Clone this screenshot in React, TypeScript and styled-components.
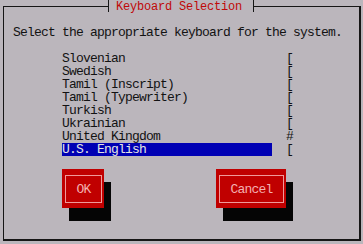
import React from "react";
import styled, { createGlobalStyle } from "styled-components";

const layouts = [
  "Slovenian",
  "Swedish",
  "Tamil (Inscript)",
  "Tamil (Typewriter)",
  "Turkish",
  "Ukrainian",
  "United Kingdom",
  "U.S. English",
];

const selectedIndex = 7;
const thumbIndex = 6;

function App() {
  return (
    <Screen>
      <GlobalStyle />
      <Frame>
        <Title>Keyboard Selection</Title>
        <Body>
          <Prompt>Select the appropriate keyboard for the system.</Prompt>
          <ListArea>
            <ListBox>
              {layouts.map((name, idx) => (
                <ListItem key={name} $selected={idx === selectedIndex}>
                  {name}
                </ListItem>
              ))}
            </ListBox>
            <ScrollTrack>
              {layouts.map((name, idx) => (
                <ScrollCell key={name}>{idx === thumbIndex ? "#" : "["}</ScrollCell>
              ))}
            </ScrollTrack>
          </ListArea>
          <ButtonRow>
            <TermButton $width={42}>
              <ButtonFace>OK</ButtonFace>
            </TermButton>
            <TermButton $width={70}>
              <ButtonFace>Cancel</ButtonFace>
            </TermButton>
          </ButtonRow>
        </Body>
      </Frame>
    </Screen>
  );
}

export default App;

const GlobalStyle = createGlobalStyle`
  html, body {
    margin: 0;
    padding: 0;
    background: #bbb6bc;
  }
`;

const Screen = styled.div`
  width: 363px;
  height: 244px;
  overflow: hidden;
  background: #bbb6bc;
  color: #121212;
  font-family: "Liberation Mono", "DejaVu Sans Mono", monospace;
  font-size: 13px;
  letter-spacing: -0.8px;
  line-height: 13px;
`;

// frame: left edge x=3, right edge x=361, bottom edge y=241
const Frame = styled.fieldset`
  box-sizing: border-box;
  margin: 0 0 0 3px;
  padding: 0;
  width: 358px;
  height: 241px;
  border: 2px solid #161616;
  border-top-width: 1px;
  border-left-width: 1px;
  min-width: 0;
`;

const Title = styled.legend`
  margin-left: 104px;
  padding: 1px 11px 0 7px;
  height: 11px;
  line-height: 12px;
  font-size: 12px;
  letter-spacing: -0.2px;
  border-left: 1px solid #161616;
  border-right: 1px solid #161616;
  color: #c00808;
`;

const Body = styled.div`
  padding-top: 14px;
`;

const Prompt = styled.div`
  padding-left: 9px;
  height: 13px;
  margin-bottom: 13px;
  white-space: nowrap;
`;

const ListArea = styled.div`
  display: flex;
  padding-left: 58px;
  gap: 14px;
`;

const ListBox = styled.div`
  width: 210px;
  display: flex;
  flex-direction: column;
`;

const ListItem = styled.div<{ $selected: boolean }>`
  height: 13px;
  white-space: nowrap;
  background: ${(p) => (p.$selected ? "#0000b4" : "transparent")};
  color: ${(p) => (p.$selected ? "#e4e4e4" : "#121212")};
`;

const ScrollTrack = styled.div`
  display: flex;
  flex-direction: column;
  width: 7px;
`;

const ScrollCell = styled.div`
  height: 13px;
`;

const ButtonRow = styled.div`
  display: flex;
  gap: 112px;
  margin-top: 13px;
  padding-left: 58px;
`;

const TermButton = styled.button<{ $width: number }>`
  box-sizing: border-box;
  width: ${(p) => p.$width}px;
  height: 39px;
  padding: 6px 2px 5px 3px;
  border: none;
  background: #c00000;
  box-shadow: 7px 13px 0 #050505;
  font: inherit;
  letter-spacing: inherit;
  cursor: pointer;
`;

const ButtonFace = styled.span`
  box-sizing: border-box;
  display: flex;
  align-items: center;
  justify-content: center;
  height: 100%;
  border: 1px solid #f09a9a;
  color: #f4b0b0;
`;
